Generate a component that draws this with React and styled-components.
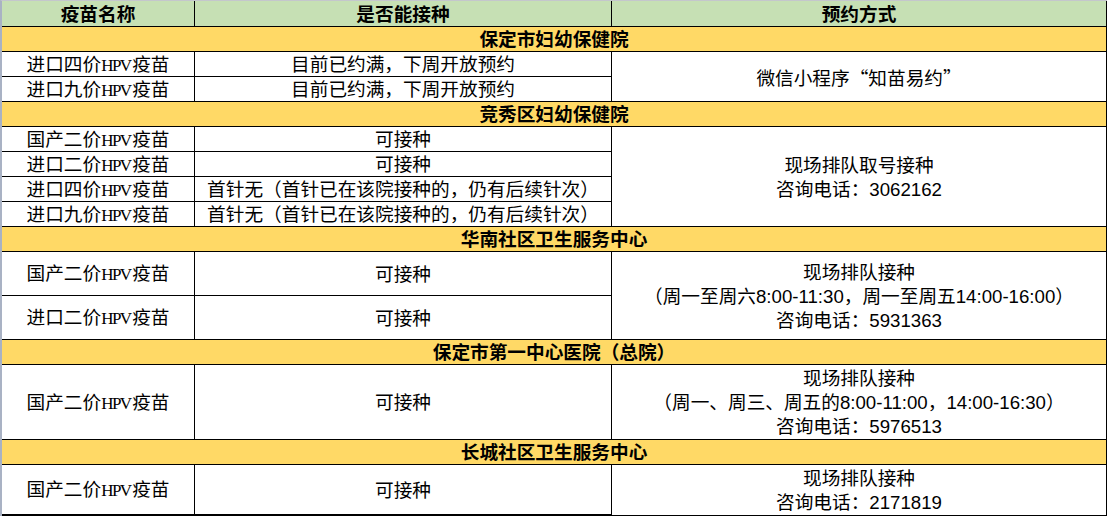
import React from 'react';
import styled, { createGlobalStyle } from 'styled-components';

const GlobalStyle = createGlobalStyle`
  html, body {
    margin: 0;
    padding: 0;
    background: #fff;
  }
  body {
    font-family: "Liberation Sans", "Noto Sans CJK SC", sans-serif;
    color: #000;
  }
`;

// 表格主体：黑色背景 + 1px 间隙，就是网格线
const Sheet = styled.div`
  display: grid;
  grid-template-columns: 192px 416px 494px;
  gap: 1px;
  width: max-content;
  background: #000;
  border-left: 2px solid #a9b2c4;
  border-top: 1px solid #c4c7cc;
  padding: 0 1px 1px 0;
`;

const Cell = styled.div`
  box-sizing: border-box;
  display: flex;
  flex-direction: column;
  align-items: center;
  justify-content: center;
  height: ${(p) => p.$h || 24}px;
  padding-top: 3px;
  grid-row: span ${(p) => p.$rows || 1};
  background: #fff;
  font-size: 18.67px;
  line-height: 24.5px;
  white-space: nowrap;
  overflow: hidden;
`;

const HeadCell = styled(Cell)`
  background: #c6e0b4;
  font-weight: 700;
`;

const GroupCell = styled(Cell)`
  grid-column: 1 / span 3;
  background: #ffd966;
  font-weight: 700;
`;

// 合并单元格：高度由左侧行决定
const MethodCell = styled(Cell)`
  height: auto;
  padding-top: 2px;
  line-height: 24px;
`;

const Line = styled.div``;

// SimSun 风格的窄 HPV
const Latin = styled.span`
  font-family: "Liberation Serif", serif;
  font-size: 17px;
  letter-spacing: -1.5px;
  margin-right: 1.5px;
`;

// 全角引号
const Quote = styled.span`
  font-family: "Noto Sans CJK SC", sans-serif;
  font-feature-settings: "fwid" 1;
`;

const hospitals = [
  {
    name: '保定市妇幼保健院',
    h: 24,
    method: ['微信小程序“知苗易约”'],
    items: [
      ['进口四价HPV疫苗', '目前已约满，下周开放预约'],
      ['进口九价HPV疫苗', '目前已约满，下周开放预约'],
    ],
  },
  {
    name: '竞秀区妇幼保健院',
    h: 24,
    method: ['现场排队取号接种', '咨询电话：3062162'],
    items: [
      ['国产二价HPV疫苗', '可接种'],
      ['进口二价HPV疫苗', '可接种'],
      ['进口四价HPV疫苗', '首针无（首针已在该院接种的，仍有后续针次）'],
      ['进口九价HPV疫苗', '首针无（首针已在该院接种的，仍有后续针次）'],
    ],
  },
  {
    name: '华南社区卫生服务中心',
    h: 43,
    method: ['现场排队接种', '（周一至周六8:00-11:30，周一至周五14:00-16:00）', '咨询电话：5931363'],
    items: [
      ['国产二价HPV疫苗', '可接种'],
      ['进口二价HPV疫苗', '可接种'],
    ],
  },
  {
    name: '保定市第一中心医院（总院）',
    h: 74,
    method: ['现场排队接种', '（周一、周三、周五的8:00-11:00，14:00-16:30）', '咨询电话：5976513'],
    items: [['国产二价HPV疫苗', '可接种']],
  },
  {
    name: '长城社区卫生服务中心',
    h: 49,
    method: ['现场排队接种', '咨询电话：2171819'],
    items: [['国产二价HPV疫苗', '可接种']],
  },
];

const VaccineName = ({ text }) => {
  const [before, after] = text.split('HPV');
  return (
    <span>
      {before}
      <Latin>HPV</Latin>
      {after}
    </span>
  );
};

const MethodLine = ({ text }) => (
  <Line>
    {text.split(/([“”])/).map((part, i) =>
      part === '“' || part === '”' ? <Quote key={i}>{part}</Quote> : part
    )}
  </Line>
);

const App = () => (
  <>
    <GlobalStyle />
    <Sheet>
      <HeadCell $h={25}>疫苗名称</HeadCell>
      <HeadCell $h={25}>是否能接种</HeadCell>
      <HeadCell $h={25}>预约方式</HeadCell>
      {hospitals.map((hos) => (
        <React.Fragment key={hos.name}>
          <GroupCell>{hos.name}</GroupCell>
          {hos.items.map(([vaccine, status], i) => (
            <React.Fragment key={i}>
              <Cell $h={hos.h}>
                <VaccineName text={vaccine} />
              </Cell>
              <Cell $h={hos.h}>{status}</Cell>
              {i === 0 && (
                <MethodCell $rows={hos.items.length}>
                  {hos.method.map((line) => (
                    <MethodLine key={line} text={line} />
                  ))}
                </MethodCell>
              )}
            </React.Fragment>
          ))}
        </React.Fragment>
      ))}
    </Sheet>
  </>
);

export default App;
